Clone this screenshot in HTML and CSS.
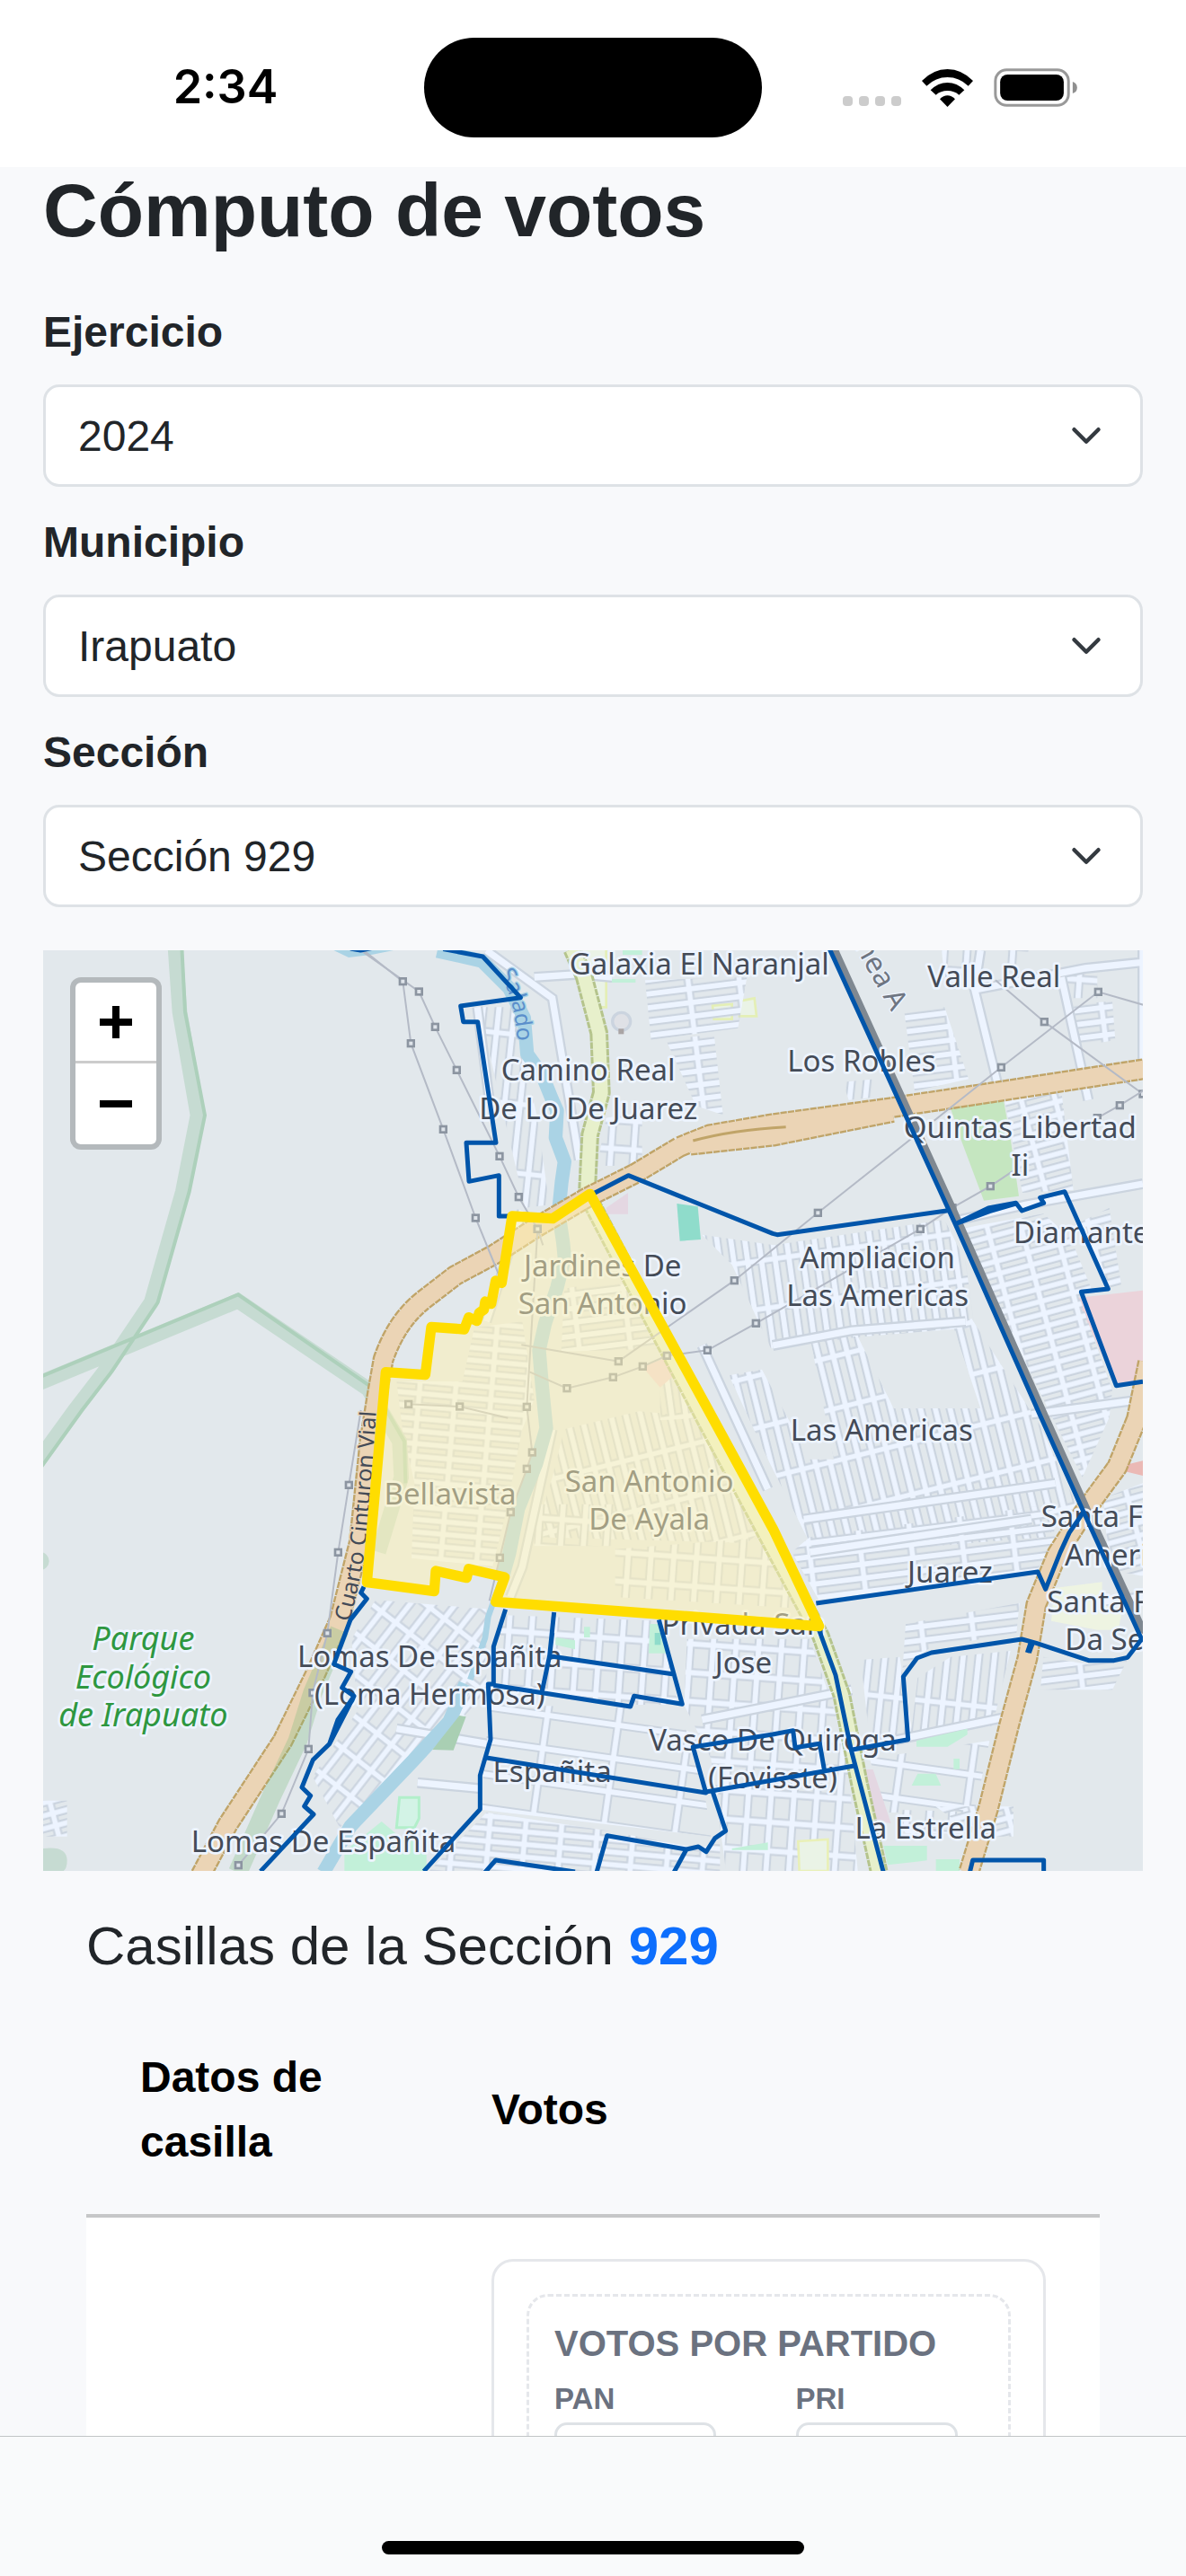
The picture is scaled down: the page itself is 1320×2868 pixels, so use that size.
FILE: index.html
```html
<!DOCTYPE html>
<html lang="es">
<head>
<meta charset="utf-8">
<meta name="viewport" content="width=device-width, initial-scale=1">
<title>Cómputo de votos</title>
<link rel="stylesheet" href="styles.css">
</head>
<body>
<header class="status">
  <time class="status-time">2:34</time>
  <div class="island"></div>
  <div class="status-icons">
    <svg class="icon-signal" viewBox="0 0 66 12" aria-hidden="true"><rect width="11" height="11" rx="4"/><rect x="18" width="11" height="11" rx="4"/><rect x="36" width="11" height="11" rx="4"/><rect x="54" width="11" height="11" rx="4"/></svg>
    <svg class="icon-wifi" viewBox="0 0 171 126" aria-hidden="true">
      <path d="M0 39Q38 0 85.500 0T171 39L155 56Q125 27 85.500 27T16 56Z"/>
      <path d="M29 70Q54 45 85.500 45T142 70L124 86Q108 72 85.500 72T47 86Z"/>
      <path d="M60 100Q72 88 85.500 88T111 100L85.500 126Z"/>
    </svg>
    <svg class="icon-battery" viewBox="0 0 280 130" aria-hidden="true">
      <rect x="5" y="5" width="246" height="120" rx="38" fill="none" stroke="#999" stroke-width="9"/>
      <rect x="21" y="21" width="214" height="88" rx="25"/>
      <path d="M265 45Q280 50 280 65T265 85Z" fill="#8f8f8f"/>
    </svg>
  </div>
</header>

<main class="page">
  <h1>Cómputo de votos</h1>
  <form class="filters">
    <div class="field">
      <label for="ejercicio">Ejercicio</label>
      <select id="ejercicio"><option>2024</option></select>
    </div>
    <div class="field">
      <label for="municipio">Municipio</label>
      <select id="municipio"><option>Irapuato</option></select>
    </div>
    <div class="field">
      <label for="seccion">Sección</label>
      <select id="seccion"><option>Sección 929</option></select>
    </div>
  </form>

  <div class="map">
    <svg class="map-canvas" viewBox="0 0 3672 3075" preserveAspectRatio="xMidYMid slice" role="img" aria-label="Mapa">
      <defs>
        <pattern id="cols" class="grid" width="46" height="160" patternUnits="userSpaceOnUse" patternTransform="rotate(-8)"><path class="case" d="M23 0V160M0 80H46"/><path class="lane" d="M23 0V160M0 80H46"/></pattern>
        <pattern id="rows" class="grid" width="110" height="42" patternUnits="userSpaceOnUse" patternTransform="rotate(-15)"><path class="case" d="M55 0V42M0 21H110"/><path class="lane" d="M55 0V42M0 21H110"/></pattern>
        <pattern id="rows2" class="grid" width="120" height="42" patternUnits="userSpaceOnUse" patternTransform="rotate(5)"><path class="case" d="M60 0V42M0 21H120"/><path class="lane" d="M60 0V42M0 21H120"/></pattern>
        <pattern id="fan" class="grid" width="48" height="170" patternUnits="userSpaceOnUse" patternTransform="rotate(-14)"><path class="case" d="M24 0V170M0 85H48"/><path class="lane" d="M24 0V170M0 85H48"/></pattern>
        <pattern id="mid" class="grid" width="76" height="96" patternUnits="userSpaceOnUse" patternTransform="rotate(4)"><path class="case" d="M38 0V96M0 48H76"/><path class="lane" d="M38 0V96M0 48H76"/></pattern>
        <pattern id="diag" class="grid" width="60" height="110" patternUnits="userSpaceOnUse" patternTransform="rotate(38)"><path class="case" d="M30 0V110M0 55H60"/><path class="lane" d="M30 0V110M0 55H60"/></pattern>
        <pattern id="wide" class="grid" width="238" height="112" patternUnits="userSpaceOnUse" patternTransform="rotate(8)"><path class="case" d="M119 0V112M0 56H238"/><path class="lane" d="M119 0V112M0 56H238"/></pattern>
        <pattern id="flat" class="grid" width="170" height="46" patternUnits="userSpaceOnUse" patternTransform="rotate(-7)"><path class="case" d="M85 0V46M0 23H170"/><path class="lane" d="M85 0V46M0 23H170"/></pattern>
        <pattern id="tall" class="grid" width="52" height="230" patternUnits="userSpaceOnUse" patternTransform="rotate(6)"><path class="case" d="M26 0V230M0 115H52"/><path class="lane" d="M26 0V230M0 115H52"/></pattern>
        <marker id="tower" markerUnits="userSpaceOnUse" markerWidth="30" markerHeight="30" refX="15" refY="15"><rect x="5" y="5" width="20" height="20" fill="#dfe4ea" stroke="#8c95a1" stroke-width="8"/></marker>
        <path id="cuarto" d="M1022 2245Q1070 2080 1086 1900T1118 1440"/>
        <path id="rio" d="M1520 80Q1585 160 1586 380"/>
        <path id="linea" d="M2672 -80L2880 290"/>
      </defs>

      <rect class="land" width="3672" height="3075"/>

      <!-- parks and land use -->
      <path fill="#c5e6c0" d="M3026 516L3206 496L3231 636L3258 821L3141 836L3066 636Z"/>
      <path fill="#ebd3da" d="M3451 1161L3672 1136V1441L3581 1456Z"/>
      <path fill="#8fdccb" d="M2116 846L2186 856L2196 966L2126 971Z"/>
      <path fill="#e4d7e2" d="M1880 860L1953 810V881H1880Z"/>
      <path fill="#eaf3e6" stroke="#e4efb6" stroke-width="8" d="M1790 -8H1880V190H1850ZM2235 185L2300 180V230H2240ZM2325 170L2375 160L2382 220H2325Z"/>
      <path fill="#c2f0d9" d="M1935 0H2000V15H1935ZM1890 96H1978V108H1890Z"/>

      <!-- street grids -->
      <path fill="url(#cols)" d="M2200 950L2440 985L3010 900L3080 1040L3110 1260L2740 1290L2430 1330L2300 1050Z"/>
      <path fill="url(#fan)" d="M2560 1290H2720L2840 1530L3130 1530L3040 1260L3100 1230L3330 1590L3450 1850L3350 1960L2580 2020L2420 1700L2290 1420L2400 1400L2560 1700H2640Z"/>
      <path fill="url(#flat)" d="M2560 1960L3370 1850L3380 1990L3310 2080L2590 2170L2500 2010Z"/>
      <path fill="url(#rows)" d="M3060 930L3340 880L3430 960L3500 1130L3460 1160L3570 1470L3560 1560L3470 1760L3340 1500Z"/>
      <path fill="url(#rows)" d="M3210 500L3400 470L3440 800L3270 810Z"/>
      <path fill="url(#rows2)" d="M1180 1440H1400L1440 1260L1600 1240L1640 1500L1600 1600L1540 1900L1500 2060L1230 2030L1240 1780L1200 1600Z"/>
      <path fill="url(#fan)" d="M1740 1600L1990 1540L2220 1560L2420 1920L2350 1980L1640 1960L1700 1760Z"/>
      <path fill="url(#cols)" d="M2060 1420L2150 1380L2240 1560L2060 1570Z"/>
      <path fill="url(#flat)" d="M1740 1130L1860 1110L1980 1120L2100 1330L1730 1340Z"/>
      <path fill="url(#mid)" d="M1640 1850H1910V1990H1640ZM1910 2000L2430 1960L2550 2200L1910 2160Z"/>
      <path fill="url(#diag)" d="M1110 2170L1480 2200L1480 2480L1290 2680L990 2930L900 2760L1050 2540L1030 2300Z"/>
      <path fill="url(#mid)" d="M1520 2220L2070 2240L2120 2520L1960 2520L1510 2450Z"/>
      <path fill="url(#wide)" d="M1490 2520L1980 2530L2180 2620L2230 2960L1460 2870Z"/>
      <path fill="url(#rows2)" d="M1480 2880L1880 2940L2190 3000L2260 2980V3075H1290Z"/>
      <path fill="url(#mid)" d="M2150 2300L2560 2300L2680 2650L2720 3075H2280L2230 2700L2140 2520Z"/>
      <path fill="url(#flat)" d="M2880 2250L3260 2180L3250 2280L2960 2330L2870 2400Z"/>
      <path fill="url(#tall)" d="M2730 2370L2860 2360L2900 2600L2920 2430L3030 2360L3230 2340L3170 2590L2760 2640Z"/>
      <path fill="url(#wide)" d="M2760 2700L3160 2640L3110 2880H2810Z"/>
      <path fill="url(#flat)" d="M2010 100L2350 90L2320 260L2030 300Z"/>
      <path fill="url(#flat)" d="M2080 300L2240 280L2270 550L2180 520Z"/>
      <path fill="url(#flat)" d="M2876 210L3010 190L3090 430L2910 470Z"/>
      <path fill="url(#tall)" d="M2670 440L2780 430V490L2690 500Z"/>
      <path fill="url(#flat)" d="M3440 180L3570 170L3580 300L3460 320Z"/>
      <path fill="url(#mid)" d="M3000 0H3110L3080 90H3010ZM3200 0H3290L3280 60H3210ZM3410 60L3520 40V160H3420Z"/>
      <path fill="url(#tall)" d="M1455 190H1570L1650 560L1690 850L1610 860L1540 560Z"/>
      <path fill="url(#rows)" d="M3540 1830L3672 1780V2090L3560 2070ZM3460 910L3560 860L3600 1120L3560 1130Z"/>
      <path fill="url(#flat)" d="M3340 2360L3490 2385L3620 2370L3570 2470H3330Z"/>
      <path fill="url(#mid)" d="M1930 550L2000 560V720H1850L1880 560ZM2840 2870L3160 2880V2950H2880Z"/>
      <path fill="url(#rows)" d="M0 2840H80V2960H0ZM2980 2860H3240V2960H3120Z"/>

      <!-- single streets -->
      <path class="street case-line" d="M1480 0L1700 160L1760 520L1790 700M1640 90L1790 80L1900 90M3120 130L3480 60L3672 40M3130 0L3110 130L3200 500M3400 90L3490 500M3672 780L3280 850L3060 900M2436 1320L2700 1270L3080 1240M3300 1550L3672 1500M2540 1900L3380 1780M2560 2010L3300 1900M1450 190L1490 500M1600 870L1480 1240M3672 0V400M2740 2660L3220 2560M2200 2570L2700 2470M1480 2650L1180 2600M1460 2800L1250 2780M2200 1320L2420 1800M1700 1600L1600 2060L1560 2160M3500 2180L3672 2160"/>
      <path class="street lane-line" d="M1480 0L1700 160L1760 520L1790 700M1640 90L1790 80L1900 90M3120 130L3480 60L3672 40M3130 0L3110 130L3200 500M3400 90L3490 500M3672 780L3280 850L3060 900M2436 1320L2700 1270L3080 1240M3300 1550L3672 1500M2540 1900L3380 1780M2560 2010L3300 1900M1450 190L1490 500M1600 870L1480 1240M3672 0V400M2740 2660L3220 2560M2200 2570L2700 2470M1480 2650L1180 2600M1460 2800L1250 2780M2200 1320L2420 1800M1700 1600L1600 2060L1560 2160M3500 2180L3672 2160"/>
      <circle class="roundabout" cx="1931" cy="238" r="30"/>
      <rect x="1921" y="262" width="18" height="18" fill="#aaa5a5"/>

      <!-- small green areas -->
      <path fill="#c2f0d9" d="M1711 2295L1776 2305V2335L1711 2320ZM1806 2260H1826V2295H1806ZM2026 2250H2076L2084 2348H2022ZM2806 2991H2951V3040L2820 3055ZM2981 3036H3060V3075H2981ZM2916 2640L3086 2600V2620L3020 2660H2916ZM2920 2750H2980L2998 2790H2900ZM1006 3010L1130 2910L1190 2960L1280 2990V3075H1006ZM2300 3000L2420 2980V3005H2300ZM3040 2700H3060V2735H3040Z"/>
      <path fill="#d3f3e6" stroke="#b2efca" stroke-width="9" d="M1190 2830H1255V2900L1240 2930H1180Z"/>
      <path fill="#8fdccb" d="M2042 2280H2062V2320H2042Z"/>
      <path fill="#eaf3e6" stroke="#e9f0b8" stroke-width="8" d="M2521 2976L2620 2970V3075H2525Z"/>
      <path fill="#eef4e2" d="M3376 2130L3536 2110V2180L3600 2220L3590 2270H3520L3366 2240Z"/>
      <path fill="#e4d7e2" d="M2746 2736H2771L2831 2916L2781 2906Z"/>
      <path fill="#ebd3da" d="M2000 1390L2110 1350L2130 1400L2060 1460Z"/>
      <path fill="#ebb9b5" d="M3610 1720L3672 1705V1755L3610 1740Z"/>

      <!-- river -->
      <path class="river" d="M1316 2L1466 36L1556 126L1606 226L1616 346L1666 416L1700 500L1716 536L1711 626L1741 706L1731 776L1721 876L1736 976L1741 1026L1716 1126L1676 1246L1656 1336L1666 1456L1680 1596L1646 1716L1586 1866L1556 2016L1536 2086"/>
      <path class="river thin" d="M1536 2086L1486 2226L1476 2296L1426 2436"/>
      <path class="river" d="M1410 2450L1356 2576L1236 2706L1026 2926L936 3080"/>
      <path fill="#aad3e5" d="M970 0H1170L1100 14L1020 24Z"/>
      <path fill="#a9cfb3" d="M1300 2670L1390 2556L1412 2560L1370 2672Z"/>

      <!-- green corridors -->
      <path class="trail" d="M441 -10L456 206L516 551L466 806L361 1176L206 1406L106 1536L-20 1710M-10 1444L651 1171L1086 1466L1190 1640L1196 1760L1120 2010"/>
      <path class="trail-edge" d="M463 -10L474 206L540 551L488 806L383 1176L230 1406L130 1536L-20 1745M-10 1425L651 1150L1106 1466L1206 1640L1210 1780"/>
      <circle cx="-10" cy="2040" r="30" fill="#c6dbd2"/>
      <path fill="#c6dbd2" d="M0 3000Q80 2990 80 3040T40 3075H0Z"/>

      <!-- highways -->
      <path class="road-case secondary" d="M1766 -4L1806 86L1856 276L1864 476L1826 616L1816 816L2216 1580L2596 2290L2666 2486L2726 2786L2791 3080"/>
      <path class="road-fill secondary" d="M1766 -4L1806 86L1856 276L1864 476L1826 616L1816 816L2216 1580L2596 2290L2666 2486L2726 2786L2791 3080"/>
      <path class="road-case" d="M526 3090L616 2921L800 2640L910 2416L990 2236L1056 1976L1091 1636L1115 1486L1136 1366Q1180 1240 1266 1171L1376 1086L1506 1016L1646 926L1816 826L1976 746L2126 656L2226 616L2436 580L2836 525L3136 480L3680 396M2160 650L2436 620L2836 540M3690 1376L3651 1566L3586 1726L3476 1876L3386 2016L3316 2186L3286 2366L3226 2586L3156 2866L3091 3080"/>
      <path class="road-fill" d="M526 3090L616 2921L800 2640L910 2416L990 2236L1056 1976L1091 1636L1115 1486L1136 1366Q1180 1240 1266 1171L1376 1086L1506 1016L1646 926L1816 826L1976 746L2126 656L2226 616L2436 580L2836 525L3136 480L3680 396M2160 650L2436 620L2836 540M3690 1376L3651 1566L3586 1726L3476 1876L3386 2016L3316 2186L3286 2366L3226 2586L3156 2866L3091 3080"/>
      <path class="median" d="M2170 636Q2300 600 2480 590"/>
      <path class="verge" d="M990 2270L900 2480L850 2640L760 2830L650 3080"/>

      <!-- power lines with towers -->
      <g class="power">
        <path d="M1060 0L1255 138L1309 256L1381 400L1524 688L1588 824L1651 931L1669 985"/>
        <path d="M1070 0L1201 104L1228 311L1336 598L1444 894L1520 1080"/>
        <path d="M3180 100L3343 239L3672 480M3700 190L3523 139L3199 391L2587 877L2308 1103L1921 1373L1597 1318"/>
        <path d="M3240 736L3163 788L3036 860L2929 931L2380 1246L2218 1336L2083 1354L2002 1390L1903 1426L1749 1463L1624 1408"/>
        <path d="M3672 470L3595 518L3520 560M1651 931L1615 1525L1633 1677L1615 1732L1561 1877L1525 2029L1490 2173"/>
        <path d="M1061 1536L1021 1786L985 2011L949 2281L900 2480L886 2668L796 2884L652 3056M1220 1516L1391 1524L1552 1562"/>
      </g>

      <path class="rail" d="M2638 -10L3035 861L3335 1536L3488 1876L3680 2290"/>

      <!-- place names -->
      <g class="place">
        <text x="2191" y="81">Galaxia El Naranjal</text>
        <text x="3175" y="124">Valle Real</text>
        <text x="1820" y="436">Camino Real</text><text x="1820" y="563">De Lo De Juarez</text>
        <text x="2733" y="404">Los Robles</text>
        <text x="3262" y="628">Quintas Libertad</text><text x="3262" y="754">Ii</text>
        <text x="1868" y="1088">Jardines De</text><text x="1868" y="1216">San Antonio</text>
        <text x="2786" y="1061">Ampliacion</text><text x="2786" y="1188">Las Americas</text>
        <text class="from" x="3240" y="979">Diamante</text>
        <text x="2800" y="1638">Las Americas</text>
        <text x="1359" y="1852">Bellavista</text>
        <text x="2024" y="1808">San Antonio</text><text x="2024" y="1934">De Ayala</text>
        <text x="1291" y="2393">Lomas De Españita</text><text x="1291" y="2521">(Loma Hermosa)</text>
        <text x="936" y="3011">Lomas De Españita</text>
        <text x="1700" y="2779">Españita</text>
        <text x="2436" y="2673">Vasco De Quiroga</text><text x="2436" y="2798">(Fovisste)</text>
        <text x="2338" y="2286">Privada San</text><text x="2338" y="2416">Jose</text>
        <text x="3028" y="2111">Juarez</text>
        <text class="from" x="3332" y="1926">Santa Fe</text><text class="from" x="3411" y="2056">Americas</text>
        <text class="from" x="3352" y="2211">Santa Fe</text><text class="from" x="3412" y="2338">Da Seccion</text>
        <text x="2947" y="2968">La Estrella</text>
      </g>
      <g class="place park">
        <text x="334" y="2338">Parque</text><text x="334" y="2466">Ecológico</text><text x="334" y="2593">de Irapuato</text>
      </g>
      <text class="along"><textPath href="#cuarto">Cuarto Cinturon Vial</textPath></text>
      <text class="along water"><textPath href="#rio">Salado</textPath></text>
      <text class="along line"><textPath href="#linea">Línea A</textPath></text>

      <!-- section limits -->
      <g class="limits">
        <path d="M1026 -6L1060 0L1100 -8M1336 -4L1468 21L1594 158L1394 186L1403 239L1451 239L1512 643H1413L1422 772L1522 752V888H1556"/>
        <path d="M1841 811L1954 752L2436 946L2451 950L3021 869"/>
        <path d="M2626 -4L3021 861L3046 916L3321 1536L3474 1876L3668 2301L3621 2362L3576 2372H3491L3316 2314L3268 2301L2966 2346L2918 2364L2872 2426L2888 2636L2698 2671"/>
        <path d="M3046 914L3156 861L3248 844L3268 870L3341 844L3329 826L3411 806L3556 1131L3466 1141L3583 1454L3672 1441M3046 914L3160 872L3248 846"/>
        <path d="M2581 2181L3321 2076L3347 2134L3396 2011L3426 1946L3474 1876M3286 2346L3298 2311M3292 2346L3304 2314"/>
        <path d="M2591 2271L2646 2421L2698 2671L2806 3080"/>
        <path d="M1071 2126L1061 2146L1081 2166L1026 2236L971 2384L1028 2410L998 2463L1038 2491L956 2651L901 2704L864 2796L893 2824L872 2859L903 2886L726 3076M1038 2491L984 2570L956 2651"/>
        <path d="M1544 2201L1504 2326V2451H1486L1494 2636L1459 2756V2869L1271 3076"/>
        <path d="M1504 2455L1961 2526L1973 2491L2134 2518L2056 2236M1706 2211L1691 2356L1666 2476M1700 2280L1691 2356M1696 2358L2106 2418"/>
        <path d="M1476 2696L2213 2814L2170 2661L2436 2619L2504 2606L2511 2663L2593 2650L2608 2736M2213 2811L2436 2772L2708 2724"/>
        <path d="M2234 2806L2279 2941L2243 2966L2214 3011L2188 2994L2148 3003L1883 2957L1848 3080M2148 3003L2106 3080M1475 3080L1511 3039L1776 3078M3094 3080L3104 3039H3341V3080"/>
      </g>
      <path class="selected" d="M1144 1409L1276 1418L1296 1258L1406 1266L1421 1226L1448 1238L1456 1211L1472 1200L1476 1173L1496 1181L1511 1104L1531 1111L1566 888L1701 896L1826 814L2216 1526L2438 1934L2591 2258L1511 2176L1541 2094L1421 2066L1414 2096L1311 2073L1306 2141L1081 2111Z"/>
    </svg>
    <div class="zoom">
      <button type="button" aria-label="Acercar"><svg viewBox="0 0 36 36"><path d="M18 0V36M0 18H36"/></svg></button>
      <button type="button" aria-label="Alejar"><svg viewBox="0 0 36 36"><path d="M0 18H36"/></svg></button>
    </div>
  </div>

  <section class="polls">
    <h2>Casillas de la Sección <strong>929</strong></h2>
    <table>
      <thead>
        <tr><th class="col-data" scope="col">Datos de casilla</th><th scope="col">Votos</th></tr>
      </thead>
      <tbody>
        <tr>
          <td></td>
          <td>
            <div class="card">
              <fieldset class="group">
                <h3>VOTOS POR PARTIDO</h3>
                <div class="parties">
                  <div class="party"><label for="pan">PAN</label><input id="pan" type="text" inputmode="numeric"></div>
                  <div class="party"><label for="pri">PRI</label><input id="pri" type="text" inputmode="numeric"></div>
                </div>
              </fieldset>
            </div>
          </td>
        </tr>
      </tbody>
    </table>
  </section>
</main>

<footer class="toolbar"><div class="home"></div></footer>
</body>
</html>
```

FILE: styles.css
```css
* { box-sizing: border-box; }

body {
  margin: 0;
  height: 100vh;
  display: flex;
  flex-direction: column;
  background: #f8f9fb;
  color: #212529;
  font: 48px/72px "Liberation Sans", Arial, sans-serif;
}

/* status bar */
.status {
  flex: none;
  height: 186px;
  padding-top: 8px;
  display: grid;
  grid-template-columns: 1fr 376px 1fr;
  align-items: center;
  background: #fff;
}
.status-time {
  padding-left: 30px;
  text-align: center;
  color: #000;
  font: 600 52px/64px Inter, sans-serif;
}
.island { height: 111px; border-radius: 56px; background: #000; }
.status-icons {
  display: flex;
  justify-content: center;
  align-items: flex-end;
  padding-right: 32px;
}
.icon-signal { width: 66px; height: 12px; margin-right: 22px; fill: #ccc; }
.icon-wifi { width: 57px; height: 42px; margin-right: 23px; }
.icon-battery { width: 93px; height: 43px; }

/* page */
.page {
  flex: 1;
  min-height: 0;
  overflow-y: auto;
  scrollbar-width: none;
  padding: 0 48px;
}
h1 { margin: 0 0 52px; font-size: 84px; line-height: 96px; font-weight: 700; }

.filters { display: grid; gap: 26px; }
.field { display: grid; gap: 22px; }
.field label { font-weight: 700; }
.field select {
  appearance: none;
  width: 100%;
  height: 114px;
  padding: 2px 108px 0 36px;
  border: 3px solid #dee2e6;
  border-radius: 18px;
  background: #fff url("data:image/svg+xml,%3Csvg xmlns='http://www.w3.org/2000/svg' viewBox='0 0 16 16'%3E%3Cpath fill='none' stroke='%23343a40' stroke-linecap='round' stroke-linejoin='round' stroke-width='2' d='m2 5 6 6 6-6'/%3E%3C/svg%3E") no-repeat right 36px center / 48px 36px;
  color: #212529;
  font: inherit;
}

/* map */
.map { position: relative; margin-top: 48px; }
.map-canvas { display: block; width: 100%; aspect-ratio: 1224 / 1025; }
.zoom {
  position: absolute;
  top: 30px;
  left: 30px;
  width: 102px;
  border: 6px solid rgba(0, 0, 0, .2);
  border-radius: 12px;
  background: #fff;
  background-clip: padding-box;
}
.zoom button {
  display: grid;
  place-items: center;
  width: 90px;
  height: 90px;
  padding: 0;
  border: 0;
  background: none;
}
.zoom button:first-child { border-bottom: 3px solid #ccc; }
.zoom svg { width: 36px; height: 36px; stroke: #000; stroke-width: 8; }

.land { fill: #e2e8ec; }
.grid path, .street { fill: none; }
.case { stroke: #cbd4df; stroke-width: 30; }
.lane { stroke: #edf4ff; stroke-width: 17; }
.case-line { stroke: #cbd4df; stroke-width: 36; }
.lane-line { stroke: #edf4ff; stroke-width: 22; }
.roundabout { fill: #dfe1e6; stroke: #cbd4df; stroke-width: 10; }
.river { fill: none; stroke: #aad3e5; stroke-width: 46; stroke-linejoin: round; }
.river.thin { stroke-width: 20; }
.trail { fill: none; stroke: #c6dbd2; stroke-width: 50; }
.trail-edge { fill: none; stroke: #add0bb; stroke-width: 12; }
.verge { fill: none; stroke: #7cb87c; stroke-opacity: .3; stroke-width: 64; }
.road-case, .road-fill { fill: none; stroke-linejoin: round; }
.road-case { stroke: #c0a468; stroke-width: 72; stroke-dasharray: 22 3; }
.road-fill { stroke: #ebd4b5; stroke-width: 58; }
.road-case.secondary { stroke: #b5c48c; stroke-width: 62; }
.road-fill.secondary { stroke: #e7f0cb; stroke-width: 44; }
.median { fill: none; stroke: #c0a468; stroke-width: 9; }
.power path {
  fill: none;
  stroke: #b4bac6;
  stroke-width: 6;
  marker-mid: url(#tower);
}
.rail { fill: none; stroke: #7f8891; stroke-width: 26; }

.place, .along {
  font-family: "Noto Sans", sans-serif;
  fill: #444b57;
  stroke: #edf4ff;
  stroke-width: 16;
  stroke-linejoin: round;
  paint-order: stroke;
}
.place { font-size: 99px; text-anchor: middle; }
.place .from { text-anchor: start; }
.place.park { fill: #2e9740; font-size: 108px; font-style: italic; }
.along { font-size: 75px; stroke: #ebd4b5; stroke-width: 8; }
.along.water { fill: #5b8fcb; stroke: #aad3e5; }
.along.line { font-size: 96px; fill: #6f7682; stroke: #edf4ff; }

.limits path { fill: none; stroke: #0055aa; stroke-width: 15; stroke-linejoin: round; }
.selected {
  fill: #fff1b0;
  fill-opacity: .5;
  stroke: #fd0;
  stroke-width: 34;
  stroke-linejoin: round;
}

/* polling places */
.polls { padding: 48px 48px 0; }
h2 { margin: 0 0 24px; font-size: 60px; line-height: 72px; font-weight: 400; }
h2 strong { color: #0d6efd; }
table { width: 100%; table-layout: fixed; border-collapse: collapse; }
.col-data { width: 391px; }
th {
  padding: 50px 60px 44px;
  border-bottom: 4px solid #c6c7c8;
  color: #000;
  text-align: left;
  vertical-align: middle;
}
td { padding: 46px 60px; background: #fff; vertical-align: top; }
.card { padding: 36px; border: 3px solid #e5e7eb; border-radius: 24px; color: #6b7280; }
.group { margin: 0; padding: 28px; border: 3px dashed #e5e7eb; border-radius: 24px; }
h3 { margin: 0 0 18px; font-size: 40px; line-height: 48px; font-weight: 700; }
.parties { display: grid; grid-template-columns: 1fr 1fr; gap: 60px; }
.party { display: grid; gap: 6px; font-size: 33px; line-height: 40px; font-weight: 700; }
.party input {
  width: 180px;
  height: 90px;
  padding: 0 24px;
  border: 3px solid #dee2e6;
  border-radius: 14px;
  background: #fff;
  font: inherit;
}

/* browser toolbar */
.toolbar {
  flex: none;
  display: flex;
  justify-content: center;
  align-items: flex-end;
  height: 156px;
  padding-bottom: 24px;
  border-top: 1px solid #c1c4c6;
  background: #f9fafb;
}
.home { width: 470px; height: 15px; border-radius: 8px; background: #000; }
```
